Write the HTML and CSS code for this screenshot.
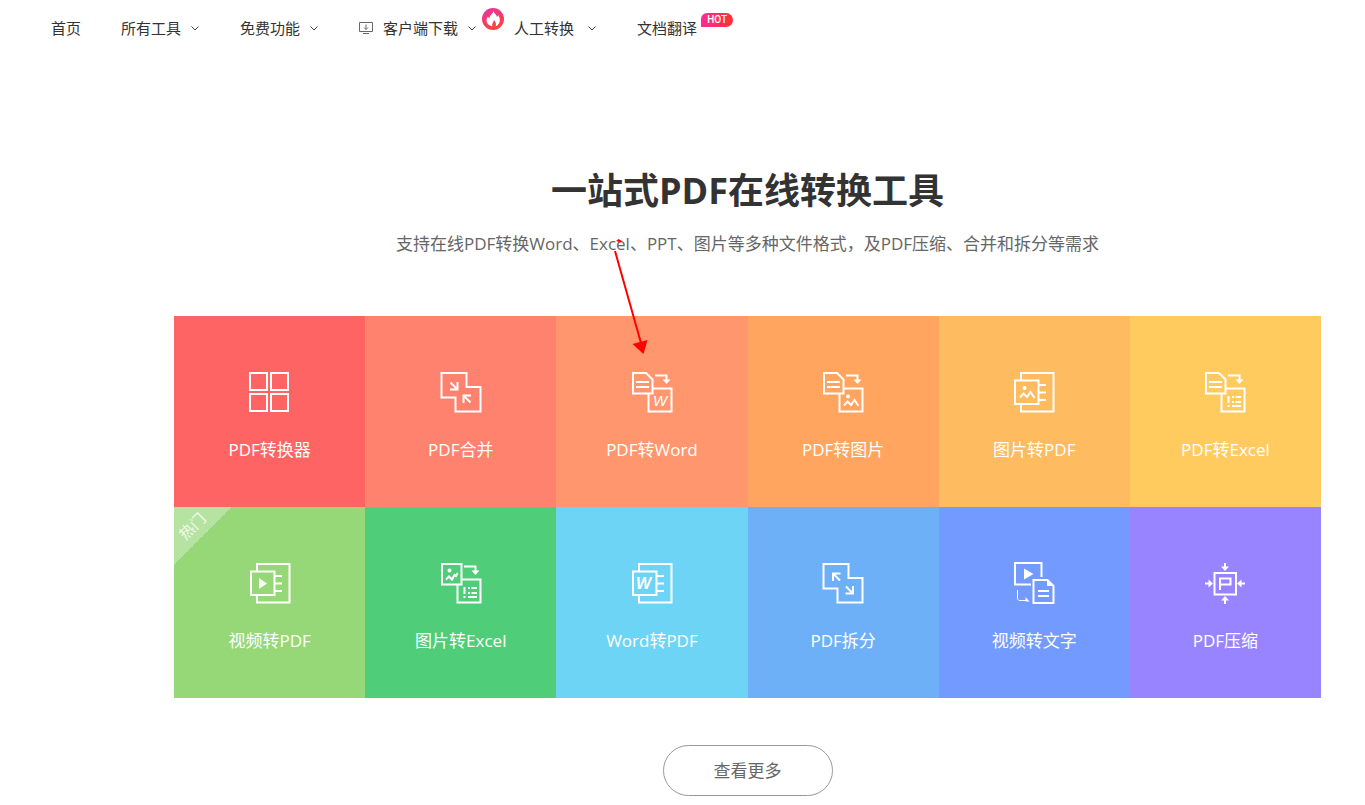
FILE: index.html
```html
<!DOCTYPE html>
<html lang="zh-CN">
<head>
<meta charset="utf-8">
<meta name="viewport" content="width=device-width, initial-scale=1">
<title>一站式PDF在线转换工具</title>
<link rel="stylesheet" href="styles.css">
</head>
<body>
<svg class="defs" width="0" height="0" aria-hidden="true">
  <defs>
    <symbol id="chevron" viewBox="0 0 10 10"><path d="M1.500 3.500 5 7l3.500-3.500"/></symbol>
    <symbol id="doc" viewBox="0 0 42 42">
      <path d="M2 2h13l6.500 6.500V22.500H2z"/><path d="M5 11h13M5 16h13"/>
    </symbol>
    <symbol id="turn" viewBox="0 0 42 42">
      <path d="M24 4.500h11.500V10"/><path class="solid" d="M31.500 8.500h8l-4 4.500z"/>
    </symbol>
    <symbol id="lower" viewBox="0 0 42 42"><path d="M22 17.500h18.500v23H17.500V23"/></symbol>
    <symbol id="page" viewBox="0 0 42 42">
      <path d="M8 9V2h32.500v38.500H8V34"/><path d="M2 9.500h23.500v23.500H2z"/><path d="M25 14h8M25 21.500h8M25 29h8"/>
    </symbol>
    <symbol id="cells" viewBox="0 0 42 42">
      <path d="M24.500 25v7M24.500 34v2M28 26h2M31.500 26h5.500M28 31h2M31.500 31h5.500M28 35h9"/>
    </symbol>
    <symbol id="stairs" viewBox="0 0 42 42"><path d="M1.500 2h25v14h14v24.500H15.500v-14H1.500z"/></symbol>
  </defs>
</svg>

<header class="header">
  <nav aria-label="主导航">
    <ul class="nav">
      <li><a href="#">首页</a></li>
      <li><a href="#">所有工具<svg class="chevron"><use href="#chevron"/></svg></a></li>
      <li><a href="#">免费功能<svg class="chevron"><use href="#chevron"/></svg></a></li>
      <li><a href="#"><svg class="client" viewBox="0 0 14 14"><path d="M.5 1.500h13v9H.5zM4 12.500h6M7 3.500v5M5 6.500l2 2 2-2"/></svg>客户端下载<svg class="chevron"><use href="#chevron"/></svg></a></li>
      <li class="nav-hot"><a href="#"><svg class="flame" viewBox="0 0 22 22"><defs><linearGradient id="pink" x1="0" y1="0" x2="0.300" y2="1"><stop offset="0" stop-color="#e535a5"/><stop offset="1" stop-color="#ff4040"/></linearGradient></defs><circle cx="11" cy="11" r="11" fill="url(#pink)"/><path fill="#fff" d="M11.500 3c.5 2.500 3 3.500 3.500 6 .8-.5 1-1 1-2 2.500 3 3.200 9-2.500 11.500 1-2 .5-4-1.500-6.500-.5 2-2.500 3.500-1.500 6.500C4 17 3.500 12 6 8.500c.3 1 .8 1.500 1.500 2C7.500 7 11 6 11.500 3z"/></svg>人工转换<svg class="chevron chevron-far"><use href="#chevron"/></svg></a></li>
      <li><a href="#">文档翻译<span class="badge">HOT</span></a></li>
    </ul>
  </nav>
</header>

<main class="main">
  <h1 class="title">一站式PDF在线转换工具</h1>
  <p class="subtitle">支持在线PDF转换Word、Excel、PPT、图片等多种文件格式，及PDF压缩、合并和拆分等需求</p>

  <div class="tools">
    <a class="tile red" href="#"><svg class="icon" viewBox="0 0 42 42"><path d="M1 2h17v17H1zM22 2h17v17H22zM1 23h17v17H1zM22 23h17v17H22z"/></svg><span>PDF转换器</span></a>
    <a class="tile coral" href="#"><svg class="icon" viewBox="0 0 42 42"><use href="#stairs"/><path d="M10.500 11.500l6 6M17.500 11v7.500H10M30.500 31.500l-6-6M23.500 32v-7.500H31"/></svg><span>PDF合并</span></a>
    <a class="tile salmon" href="#"><svg class="icon" viewBox="0 0 42 42"><use href="#doc"/><use href="#turn"/><use href="#lower"/><text x="22" y="35">W</text></svg><span>PDF转Word</span></a>
    <a class="tile orange" href="#"><svg class="icon" viewBox="0 0 42 42"><use href="#doc"/><use href="#turn"/><use href="#lower"/><circle class="solid" cx="26" cy="25.500" r="2"/><path d="M22 34.500l3.500-4 3.500 3.500 3.500-5 4 6"/></svg><span>PDF转图片</span></a>
    <a class="tile amber" href="#"><svg class="icon" viewBox="0 0 42 42"><use href="#page"/><circle class="solid" cx="11.500" cy="17" r="2"/><path d="M7 26.500l3.500-4 3.500 3.500 3.500-5 4 6"/></svg><span>图片转PDF</span></a>
    <a class="tile yellow" href="#"><svg class="icon" viewBox="0 0 42 42"><use href="#doc"/><use href="#turn"/><use href="#lower"/><use href="#cells"/></svg><span>PDF转Excel</span></a>
    <a class="tile lime" href="#"><span class="ribbon"><span class="ribbon-text">热门</span></span><svg class="icon" viewBox="0 0 42 42"><use href="#page"/><path class="solid" d="M10 16l8 5.500-8 5.500z"/></svg><span>视频转PDF</span></a>
    <a class="tile green" href="#"><svg class="icon" viewBox="0 0 42 42"><path d="M2 2h19.500v20.500H2z"/><circle class="solid" cx="9.500" cy="8.500" r="2"/><path d="M6 17.500l3-3 3 3 2.500-4.500 1.500 1 1.500-3"/><use href="#turn"/><use href="#lower"/><use href="#cells"/></svg><span>图片转Excel</span></a>
    <a class="tile cyan" href="#"><svg class="icon" viewBox="0 0 42 42"><use href="#page"/><text class="heavy" x="5" y="27">W</text></svg><span>Word转PDF</span></a>
    <a class="tile sky" href="#"><svg class="icon" viewBox="0 0 42 42"><use href="#stairs"/><path d="M18 18.500l-6-6M11 19v-7.500h7.500M24 24.500l6 6M31 24v7.500h-7.500"/></svg><span>PDF拆分</span></a>
    <a class="tile blue" href="#"><svg class="icon" viewBox="0 0 42 42"><path d="M28.500 15V1H2v21.500h16"/><path class="solid" d="M11 6.500l9.500 5.500-9.500 5.500z"/><path d="M20.500 18h14l6 6v17h-20zM25 29h11M25 34h11"/><path class="solid" d="M34 17v7h7z"/><path class="thin" d="M4.500 28v9l1.500 1.500h9"/><path class="solid" d="M12.500 35l4 4.500h-4z"/></svg><span>视频转文字</span></a>
    <a class="tile violet" href="#"><svg class="icon" viewBox="0 0 42 42"><path d="M10.500 11h21.500v21.500H10.500z"/><path d="M16 28V16.500h10.500v6H16"/><path d="M21 1v4M21 42v-4M1 21.500h4M41 21.500h-4"/><path class="solid" d="M17 4.500h8L21 9zM17 38.500h8L21 34zM4.500 17.500v8L9 21.500zM37.500 17.500v8L33 21.500z"/></svg><span>PDF压缩</span></a>

    <svg class="pointer" viewBox="0 0 40 116" aria-hidden="true"><path d="M7 13l26 92" fill="none" stroke="red" stroke-width="2"/><path d="M24.500 106l15-4-4 14z" fill="red"/><path d="M8 3l2.500-2 3.500 2-1 1.500z" fill="red"/></svg>
  </div>

  <button class="more" type="button">查看更多</button>
</main>
</body>
</html>
```
FILE: styles.css
```css
* {
  box-sizing: border-box;
}

body {
  margin: 0;
  background: #fff;
  color: #333;
  font-family: "Open Sans", "Noto Sans CJK SC", sans-serif;
}

a {
  color: inherit;
  text-decoration: none;
}

.defs {
  position: absolute;
}

.header {
  padding: 0 51px;
}

.nav {
  display: flex;
  gap: 40px;
  margin: 0;
  padding: 0;
  list-style: none;
  font-size: 15px;
  line-height: 24px;
}

.nav a {
  display: flex;
  align-items: center;
  height: 56px;
  white-space: nowrap;
}

.nav .nav-hot {
  margin-left: -35px;
}

.chevron {
  width: 10px;
  height: 10px;
  margin-left: 9px;
  fill: none;
  stroke: #444;
}

.chevron-far {
  margin-left: 13px;
}

.client {
  width: 14px;
  height: 14px;
  margin-right: 10px;
  fill: none;
  stroke: #666;
}

.flame {
  width: 22px;
  height: 22px;
  margin: 0 10px 18px 0;
}

.badge {
  width: 32px;
  height: 14px;
  margin: 0 0 16px 4px;
  border-radius: 6px 7px 7px 0;
  background: linear-gradient(90deg, #fb2c95, #ff3030);
  color: #fff;
  font: 500 10px/14px Roboto, sans-serif;
  text-align: center;
}

.main {
  display: flex;
  flex-direction: column;
  align-items: center;
  padding: 108px 44px 8px 174px;
}

.title {
  margin: 0;
  font-size: 36px;
  font-weight: 700;
  line-height: 54px;
}

.subtitle {
  margin: 13px 0 0;
  color: #666;
  font-size: 17px;
  line-height: 26px;
}

.tools {
  position: relative;
  display: grid;
  grid-template-columns: repeat(6, 1fr);
  width: 100%;
  margin-top: 59px;
}

.tile {
  position: relative;
  display: flex;
  flex-direction: column;
  align-items: center;
  gap: 24px;
  aspect-ratio: 1;
  padding-top: 55px;
  color: #fff;
  font-size: 17px;
  line-height: 26px;
}

.red { background: #ff6464; }
.coral { background: #ff826e; }
.salmon { background: #ff966e; }
.orange { background: #ffa55f; }
.amber { background: #ffbb5f; }
.yellow { background: #ffcb5f; }
.lime { background: #96d778; }
.green { background: #50cd78; }
.cyan { background: #6ed4f5; }
.sky { background: #6eb0f7; }
.blue { background: #739bff; }
.violet { background: #9884ff; }

.icon {
  width: 42px;
  height: 42px;
  fill: none;
  stroke: #fff;
  stroke-width: 2;
}

.icon text {
  fill: #fff;
  stroke: none;
  font: italic 400 15px "Liberation Sans", sans-serif;
}

.icon .heavy {
  font-size: 16px;
  font-weight: 700;
}

.icon .thin {
  stroke-width: 1;
}

.solid {
  fill: #fff;
  stroke: none;
}

.ribbon {
  position: absolute;
  top: 0;
  left: 0;
  width: 58px;
  height: 58px;
  background: linear-gradient(135deg, rgba(255, 255, 255, 0.3) 50%, transparent 50%);
}

.ribbon-text {
  position: absolute;
  top: 6px;
  left: 2px;
  width: 32px;
  font-size: 15px;
  line-height: 26px;
  text-align: center;
  opacity: 0.85;
  transform: rotate(-45deg);
}

.pointer {
  position: absolute;
  top: -78px;
  left: 434px;
  width: 40px;
  height: 116px;
  pointer-events: none;
}

.more {
  width: 170px;
  height: 51px;
  margin-top: 47px;
  border: 1px solid #999;
  border-radius: 26px;
  background: #fff;
  color: #666;
  font-family: inherit;
  font-size: 17px;
  line-height: 26px;
}
```
